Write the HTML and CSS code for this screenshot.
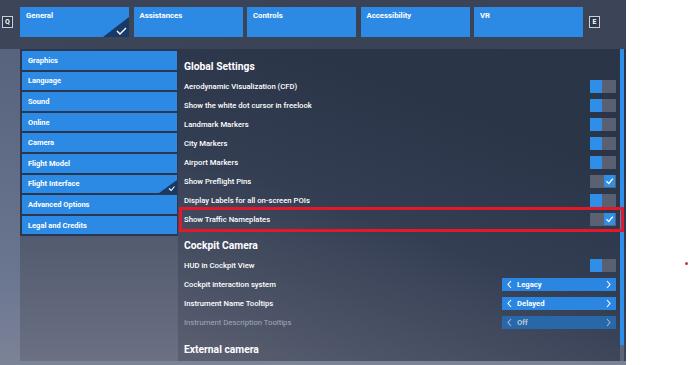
FILE: index.html
```html
<!DOCTYPE html>
<html lang="en">
<head>
    <meta charset="UTF-8">
    <meta name="viewport" content="width=device-width, initial-scale=1.0">
    <title>Options - General</title>
    <link rel="stylesheet" href="styles.css">
</head>
<body>

    <div class="game">
        <!-- Top tabs -->
        <div class="topbar">
            <span class="key key-q">Q</span>
            <div class="tabs">
                <div class="tab active">General
                    <svg class="corner" width="26" height="20" viewBox="0 0 26 20"><polygon points="26,0 26,20 0,20" fill="#173a66"/><polyline points="14,14 17,17 23,11" fill="none" stroke="#fff" stroke-width="1.4"/></svg>
                </div>
                <div class="tab">Assistances</div>
                <div class="tab">Controls</div>
                <div class="tab">Accessibility</div>
                <div class="tab">VR</div>
            </div>
            <span class="key key-e">E</span>
        </div>

        <div class="main">
            <!-- Category menu -->
            <div class="sidebar">
                <ul class="menu">
                    <li>Graphics</li>
                    <li>Language</li>
                    <li>Sound</li>
                    <li>Online</li>
                    <li>Camera</li>
                    <li>Flight Model</li>
                    <li class="active">Flight Interface
                        <svg class="corner" width="18" height="13" viewBox="0 0 18 13"><polygon points="18,0 18,13 0,13" fill="#173a66"/><polyline points="10,8.5 12.2,10.5 15.5,6.5" fill="none" stroke="#fff" stroke-width="1.1"/></svg>
                    </li>
                    <li>Advanced Options</li>
                    <li>Legal and Credits</li>
                </ul>
            </div>

            <!-- Settings list -->
            <div class="content">
                <div class="settings">
                    <h2>Global Settings</h2>
                    <div class="row"><span>Aerodynamic Visualization (CFD)</span><span class="toggle"></span></div>
                    <div class="row"><span>Show the white dot cursor in freelook</span><span class="toggle"></span></div>
                    <div class="row"><span>Landmark Markers</span><span class="toggle"></span></div>
                    <div class="row"><span>City Markers</span><span class="toggle"></span></div>
                    <div class="row"><span>Airport Markers</span><span class="toggle"></span></div>
                    <div class="row"><span>Show Preflight Pins</span><span class="toggle on"><svg width="11" height="12" viewBox="0 0 11 12"><polyline points="2.5,6.2 4.8,8.5 8.8,3.6" fill="none" stroke="#fff" stroke-width="1.3"/></svg></span></div>
                    <div class="row"><span>Display Labels for all on-screen POIs</span><span class="toggle"></span></div>
                    <div class="row highlight"><span>Show Traffic Nameplates</span><span class="toggle on"><svg width="11" height="12" viewBox="0 0 11 12"><polyline points="2.5,6.2 4.8,8.5 8.8,3.6" fill="none" stroke="#fff" stroke-width="1.3"/></svg></span></div>

                    <h2 class="section">Cockpit Camera</h2>
                    <div class="row"><span>HUD in Cockpit View</span><span class="toggle"></span></div>
                    <div class="row"><span>Cockpit interaction system</span>
                        <span class="picker"><svg width="5" height="9" viewBox="0 0 5 9"><polyline points="4,1 1,4.5 4,8" fill="none" stroke="#fff" stroke-width="1.1"/></svg><span class="value">Legacy</span><svg width="5" height="9" viewBox="0 0 5 9"><polyline points="1,1 4,4.5 1,8" fill="none" stroke="#fff" stroke-width="1.1"/></svg></span>
                    </div>
                    <div class="row"><span>Instrument Name Tooltips</span>
                        <span class="picker"><svg width="5" height="9" viewBox="0 0 5 9"><polyline points="4,1 1,4.5 4,8" fill="none" stroke="#fff" stroke-width="1.1"/></svg><span class="value">Delayed</span><svg width="5" height="9" viewBox="0 0 5 9"><polyline points="1,1 4,4.5 1,8" fill="none" stroke="#fff" stroke-width="1.1"/></svg></span>
                    </div>
                    <div class="row disabled"><span>Instrument Description Tooltips</span>
                        <span class="picker"><svg width="5" height="9" viewBox="0 0 5 9"><polyline points="4,1 1,4.5 4,8" fill="none" stroke="#9fb6d2" stroke-width="1.1"/></svg><span class="value">Off</span><svg width="5" height="9" viewBox="0 0 5 9"><polyline points="1,1 4,4.5 1,8" fill="none" stroke="#9fb6d2" stroke-width="1.1"/></svg></span>
                    </div>

                    <h2 class="section last">External camera</h2>
                </div>
                <div class="scrollbar"><div class="thumb"></div></div>
            </div>
        </div>
    </div>

    <div class="blank"><span class="dot"></span></div>

</body>
</html>
```

FILE: styles.css
```css
html, body {
    margin: 0;
    padding: 0;
}
body {
    display: flex;
    width: 690px;
    height: 365px;
    overflow: hidden;
    background: #fff;
    color: #fff;
    font-family: Roboto, "Liberation Sans", sans-serif;
}
.game {
    width: 626px;
    height: 365px;
    display: flex;
    flex-direction: column;
    background: #3b4457;
}

/* top bar */
.topbar {
    height: 49px;
    box-sizing: border-box;
    display: flex;
    align-items: flex-start;
    padding: 7px 0 0 2px;
    background: linear-gradient(90deg, #3d4659, #3a4356 60%, #3c4558);
}
.key {
    margin-top: 9px;
    width: 11px;
    height: 12px;
    box-sizing: border-box;
    border: 1px solid #c8cfdb;
    display: flex;
    align-items: center;
    justify-content: center;
    font-size: 7px;
    font-weight: 700;
    background: #2f384a;
}
.key-q {
    margin-right: 7px;
}
.key-e {
    margin-left: 6px;
}
.tabs {
    display: flex;
    gap: 4.5px;
}
.tab {
    position: relative;
    width: 109px;
    height: 30px;
    box-sizing: border-box;
    padding: 4px 6px;
    background: #2d8ae4;
    font-size: 7.8px;
    font-weight: 700;
    line-height: 10px;
}
.corner {
    position: absolute;
    right: 0;
    bottom: 0;
    display: block;
}

/* main area */
.main {
    flex: 1;
    display: flex;
    padding: 0 0 4px 20px;
    background: linear-gradient(180deg, #57627d, #6a7590 70%, #7b8397);
}
.sidebar {
    width: 158px;
    display: flex;
    flex-direction: column;
    background: linear-gradient(180deg, #3e4860 0%, #4f586d 55%, #6b7083 100%);
}
.menu {
    list-style: none;
    margin: 0;
    padding: 2px 1px 2px 2px;
    display: flex;
    flex-direction: column;
    gap: 2px;
    background: #2b3650;
}
.menu li {
    position: relative;
    height: 18.6px;
    padding-left: 6px;
    display: flex;
    align-items: center;
    background: #2d8ae4;
    font-size: 7.5px;
    font-weight: 700;
}
.content {
    width: 448px;
    display: flex;
    background: linear-gradient(200deg, #2b3548 25%, #343e53 55%, #4e5568 85%, #5c6172 100%);
}
.settings {
    flex: 1;
    padding: 8px 4px 0 6px;
}
.settings h2 {
    margin: 0;
    font-size: 10.3px;
    font-weight: 700;
    line-height: 20px;
}
.settings h2.section {
    margin-top: 7px;
}
.settings h2.last {
    margin-top: 8px;
}
.row {
    height: 19px;
    display: flex;
    align-items: center;
    justify-content: space-between;
    font-size: 7.7px;
    font-weight: 500;
}
.row.disabled {
    color: #a3abb8;
    font-weight: 400;
}
.row.highlight {
    position: relative;
}
.row.highlight::after {
    content: "";
    position: absolute;
    left: -5px;
    right: -8px;
    top: -3px;
    bottom: -3px;
    border: 3px solid #e3192a;
}

/* toggles */
.toggle {
    width: 26px;
    height: 13px;
    display: flex;
    background: #596071;
}
.toggle::before {
    content: "";
    width: 12px;
    background: #2e8ee8;
}
.toggle.on {
    justify-content: flex-end;
    padding-right: 1px;
    box-sizing: border-box;
    background: #5a6170;
}
.toggle.on::before {
    display: none;
}
.toggle.on svg {
    display: block;
    background: #2e8ee8;
}

/* value pickers */
.picker {
    width: 114px;
    height: 13px;
    box-sizing: border-box;
    padding: 0 5px;
    display: flex;
    align-items: center;
    background: #2b86e2;
    font-weight: 700;
}
.picker .value {
    flex: 1;
    padding-left: 5px;
}
.row.disabled .picker {
    background: #2868a8;
    color: #b6c6d9;
}

/* scrollbar */
.scrollbar {
    width: 4px;
    margin-right: 2px;
    display: flex;
    flex-direction: column;
    background: #5d6578;
}
.thumb {
    height: 296px;
    background: #2e8ee8;
}

.blank {
    flex: 1;
    padding: 262px 0 0 59px;
}
.dot {
    display: block;
    width: 3px;
    height: 3px;
    border-radius: 50%;
    background: #c23440;
}
```
